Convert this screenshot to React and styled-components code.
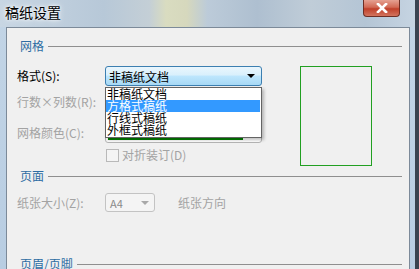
import React from "react";
import styled, { createGlobalStyle } from "styled-components";

const GlobalStyle = createGlobalStyle`
  html, body {
    margin: 0;
    padding: 0;
    background: #3a4350;
  }
  body {
    font-family: "Noto Sans CJK SC", "Liberation Sans", sans-serif;
    font-size: 12px;
  }
`;

const optionItems = ["非稿纸文档", "方格式稿纸", "行线式稿纸", "外框式稿纸"];

const App = () => {
  return (
    <>
      <GlobalStyle />
      <Window>
        <TitleBar>
          <Title>稿纸设置</Title>
          <CloseButton>
            <svg width="12" height="10" viewBox="0 0 12 10">
              <path
                d="M2 1 L10 9 M10 1 L2 9"
                stroke="#ffffff"
                strokeWidth="2.6"
                strokeLinecap="square"
              />
            </svg>
          </CloseButton>
        </TitleBar>
        <Client>
          <SectionHeader>
            <SectionLabel>网格</SectionLabel>
            <SectionLine />
          </SectionHeader>

          <GridSection>
            <FormColumn>
              <FormRow $height={20}>
                <Label>格式(S):</Label>
                <SelectWrap>
                  <FocusSelect>
                    <span>非稿纸文档</span>
                    <Arrow $color="#000" />
                  </FocusSelect>
                  <OptionList>
                    {optionItems.map((item, i) => (
                      <OptionItem key={item} $active={i === 1}>
                        {item}
                      </OptionItem>
                    ))}
                  </OptionList>
                </SelectWrap>
              </FormRow>
              <FormRow $height={20} $top={6}>
                <Label $disabled>行数×列数(R):</Label>
              </FormRow>
              <FormRow $height={20} $top={11}>
                <Label $disabled>网格颜色(C):</Label>
                <ColorSelect>
                  <ColorBar />
                </ColorSelect>
              </FormRow>
              <FormRow $height={14} $top={5}>
                <Label />
                <CheckBox />
                <CheckText>对折装订(D)</CheckText>
              </FormRow>
            </FormColumn>
            <Preview />
          </GridSection>

          <SectionHeader $top={3}>
            <SectionLabel>页面</SectionLabel>
            <SectionLine />
          </SectionHeader>

          <FormRow $height={19} $top={10}>
            <Label $disabled>纸张大小(Z):</Label>
            <SmallSelect>
              <span>A4</span>
              <Arrow $color="#a8a8a8" />
            </SmallSelect>
            <Label $disabled $inline>
              纸张方向
            </Label>
          </FormRow>

          <SectionHeader $top={45}>
            <SectionLabel>页眉/页脚</SectionLabel>
            <SectionLine />
          </SectionHeader>
        </Client>
      </Window>
    </>
  );
};

export default App;

const Window = styled.div`
  width: 415px;
  height: 269px;
  overflow: hidden;
  border-right: 4px solid #3a4350;
  background: linear-gradient(180deg, #c3d5e6 0%, #b8cde2 100%);
  display: flex;
  flex-direction: column;
`;

const TitleBar = styled.div`
  height: 27px;
  flex: none;
  display: flex;
  justify-content: space-between;
  align-items: flex-start;
  padding: 0 15px 0 5px;
  background: linear-gradient(
    90deg,
    #c8d6e3 0%,
    #b7c8d8 25%,
    #c4cfd6 36%,
    #d9dcc0 40%,
    #d6d8bd 45%,
    #bccbd9 50%,
    #aebfd0 62%,
    #c0cdd8 75%,
    #b4c5d5 88%,
    #c6d4e2 100%
  );
`;

const Title = styled.div`
  font-size: 14px;
  line-height: 14px;
  margin-top: 5px;
  color: #000;
  text-shadow: 0 0 6px #ffffff, 0 0 3px #ffffff;
`;

const CloseButton = styled.div`
  width: 37px;
  height: 17px;
  box-sizing: border-box;
  border: 1px solid #6e2e24;
  border-top: none;
  border-radius: 0 0 4px 4px;
  background: linear-gradient(180deg, #e5a192 0%, #d26a55 45%, #c0402a 55%, #d2745e 100%);
  display: flex;
  align-items: center;
  justify-content: center;
`;

const Client = styled.div`
  margin-left: 6px;
  width: 404px;
  flex: 1;
  box-sizing: border-box;
  border: 1px solid #7c8a99;
  border-bottom: none;
  background: #f0f0f0;
  padding: 11px 7px 0 10px;
  display: flex;
  flex-direction: column;
`;

const SectionHeader = styled.div`
  display: flex;
  align-items: center;
  height: 14px;
  margin-top: ${(p) => p.$top || 0}px;
  padding-left: 3px;
  flex: none;
`;

const SectionLabel = styled.span`
  color: #2e6da3;
  font-size: 12px;
  line-height: 14px;
  padding-right: 4px;
`;

const SectionLine = styled.div`
  flex: 1;
  height: 1px;
  background: #8f8f8f;
  margin-right: 0;
`;

const GridSection = styled.div`
  display: flex;
  align-items: flex-start;
  margin-top: 13px;
  flex: none;
`;

const FormColumn = styled.div`
  display: flex;
  flex-direction: column;
  width: 245px;
`;

const FormRow = styled.div`
  display: flex;
  align-items: center;
  height: ${(p) => p.$height}px;
  margin-top: ${(p) => p.$top || 0}px;
  flex: none;
`;

const Label = styled.span`
  width: ${(p) => (p.$inline ? "auto" : "88px")};
  margin-left: ${(p) => (p.$inline ? "23px" : "0")};
  flex: none;
  color: ${(p) => (p.$disabled ? "#a3a3a3" : "#000")};
  font-size: 12px;
  line-height: 14px;
  white-space: nowrap;
`;

const SelectWrap = styled.div`
  position: relative;
  width: 157px;
  height: 20px;
`;

const FocusSelect = styled.div`
  width: 157px;
  height: 20px;
  box-sizing: border-box;
  border: 1px solid #3c7fb1;
  border-radius: 3px;
  background: linear-gradient(180deg, #eaf6fd 0%, #d9f0fc 45%, #bee6fd 50%, #a7d9f5 100%);
  display: flex;
  align-items: center;
  justify-content: space-between;
  padding: 0 6px 0 3px;
  font-size: 12px;
  color: #000;
`;

const Arrow = styled.span`
  width: 0;
  height: 0;
  border-left: 4px solid transparent;
  border-right: 4px solid transparent;
  border-top: 4px solid ${(p) => p.$color};
`;

const OptionList = styled.div`
  position: absolute;
  left: 0;
  top: 21px;
  width: 157px;
  box-sizing: border-box;
  border: 1px solid #646464;
  background: #fff;
  box-shadow: 2px 2px 3px rgba(0, 0, 0, 0.25);
  padding: 0 0 1px 0;
  z-index: 2;
`;

const OptionItem = styled.div`
  height: 12px;
  line-height: 12px;
  font-size: 12px;
  padding-left: 1px;
  margin-right: 1px;
  color: ${(p) => (p.$active ? "#fff" : "#000")};
  background: ${(p) => (p.$active ? "#3399ff" : "transparent")};
  white-space: nowrap;
`;

const ColorSelect = styled.div`
  width: 157px;
  height: 20px;
  box-sizing: border-box;
  border: 1px solid #b5b5b5;
  border-radius: 3px;
  background: #fff;
  display: flex;
  align-items: flex-end;
  padding: 0 0 2px 2px;
`;

const ColorBar = styled.div`
  width: 135px;
  height: 6px;
  background: #008000;
`;

const CheckBox = styled.span`
  width: 13px;
  height: 13px;
  box-sizing: border-box;
  border: 1px solid #b9b9b9;
  background: #f4f4f4;
  margin-left: 1px;
  flex: none;
`;

const CheckText = styled.span`
  margin-left: 3px;
  color: #a3a3a3;
  font-size: 12px;
  line-height: 14px;
`;

const Preview = styled.div`
  width: 72px;
  height: 100px;
  box-sizing: border-box;
  border: 1px solid #22a022;
  margin-left: 38px;
  flex: none;
`;

const SmallSelect = styled.div`
  width: 50px;
  height: 19px;
  box-sizing: border-box;
  border: 1px solid #c3c3c3;
  border-radius: 3px;
  background: #f4f4f4;
  display: flex;
  align-items: center;
  justify-content: space-between;
  padding: 0 5px 0 4px;
  color: #8a8a8a;
  font-size: 11px;
  flex: none;
`;
